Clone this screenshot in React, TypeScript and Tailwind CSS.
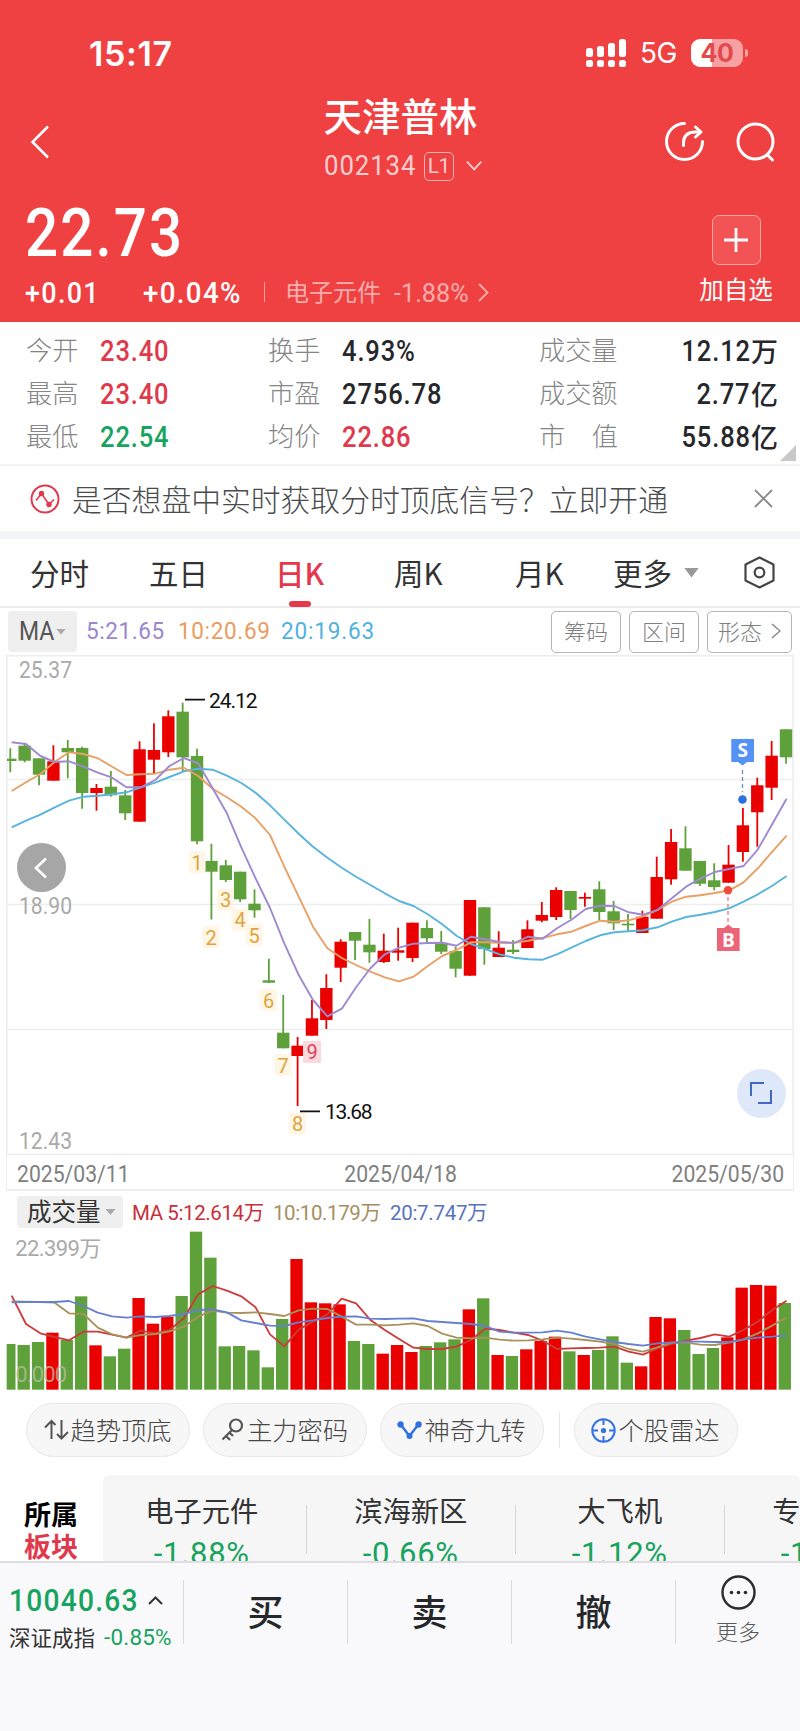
import type { ReactNode } from "react";

type Candle = [high: number, top: number, bottom: number, low: number, up: 0 | 1];

const RED = "#eb0000";
const GREEN = "#5ea03a";
const STEP = 14.365;

const candles: Candle[] = [
  [748.3, 758.7, 761, 772.3, 0],
  [743.3, 745.7, 760.7, 762.3, 0],
  [758.3, 758.3, 774.7, 785.3, 0],
  [745.3, 761.3, 780.7, 780.7, 1],
  [740, 748, 752.3, 778.3, 0],
  [746.7, 748, 793, 808.7, 0],
  [784, 788, 793, 810.7, 1],
  [771, 786.7, 795.3, 796.7, 0],
  [790, 795.3, 813.3, 820, 0],
  [741.3, 749.3, 821.7, 821.7, 1],
  [723.3, 750, 759.7, 773.3, 1],
  [710.3, 716.3, 752.3, 757, 1],
  [702.7, 711.7, 757.3, 771.7, 0],
  [748.7, 756, 841.3, 844.3, 0],
  [843.7, 861, 871.7, 919.5, 0],
  [860, 865.3, 880, 882, 0],
  [871.7, 871.7, 899.3, 902, 0],
  [889.3, 903.7, 910.3, 917.7, 0],
  [958.7, 980.3, 982.7, 983, 0],
  [995, 1032.7, 1048.3, 1048.3, 0],
  [1037, 1045.7, 1056, 1106, 1],
  [1000, 1018.3, 1035.7, 1035.7, 1],
  [974.3, 988, 1020, 1029, 1],
  [939.3, 941.7, 967.7, 982, 1],
  [932, 932, 940.7, 960, 0],
  [919, 944.7, 952.3, 962.7, 0],
  [933.7, 950.7, 962, 963, 1],
  [927.7, 950.3, 952.7, 960.7, 1],
  [922.7, 922.7, 958, 962, 1],
  [920.3, 928, 938.3, 942.7, 0],
  [931, 942.7, 951.7, 954, 0],
  [946.7, 951, 968.7, 977.3, 0],
  [900, 900, 975.7, 975.7, 1],
  [907.3, 907.3, 949, 964.7, 0],
  [931.3, 947.7, 957, 957, 1],
  [940, 949.7, 952, 954, 0],
  [920.3, 929.3, 948, 948, 1],
  [902, 915, 920.7, 922.3, 1],
  [887.3, 890, 917, 920, 1],
  [891, 891, 910, 919, 0],
  [892.7, 897, 898.7, 906.7, 1],
  [881.3, 889.3, 912, 920, 0],
  [901, 911.3, 923.3, 930, 0],
  [914, 923.7, 925.3, 931, 0],
  [910.7, 916.7, 933, 933, 1],
  [856.7, 877, 918.7, 918.7, 1],
  [829, 842, 879.3, 884.7, 1],
  [826.3, 848.3, 870.7, 870.7, 0],
  [861, 861, 883.7, 886, 0],
  [863.3, 880.3, 887, 890.3, 0],
  [845, 864.7, 882.7, 882.7, 1],
  [808, 825.3, 852, 861.7, 1],
  [777.7, 785.3, 812.3, 846.7, 1],
  [741, 755.7, 787.7, 800, 1],
  [729.3, 729.3, 757.3, 763.7, 0],
];

const ma5 = [
  742.3, 744, 756, 762, 761.3, 766.7, 772.7, 777.7, 787.3, 787.3, 780, 766, 758, 763.3, 788.3, 813.3, 847.3, 878.3, 908,
  943.3, 975, 1000, 1016.3, 1008.7, 987.3, 968.3, 954.3, 947.7, 943.7, 943, 942.7, 945.7, 936.7, 939.3, 942, 943, 936.7,
  938.7, 928.3, 919.7, 909, 905.7, 906, 912.3, 914.7, 910, 898.3, 886.7, 878.7, 872, 869, 866, 849.3, 824, 798.7,
];
const ma10 = [
  791, 782.3, 774, 761.7, 752.3, 754, 758.3, 766.7, 775, 774.3, 773.7, 769.7, 767.7, 776, 788.7, 797.3, 806.7, 818.3,
  835, 866.7, 896.7, 926.7, 948.3, 958, 965, 971.7, 977.3, 981.3, 976.7, 966, 956, 950, 942.3, 942.3, 942.7, 942.7,
  940.7, 938, 934.3, 931.7, 926, 920.7, 921.7, 920.3, 916.3, 910, 901.7, 896.7, 895.3, 893, 890.3, 882.3, 868.3, 851.7,
  835.7,
];
const ma20 = [
  827.3, 820.7, 814.7, 807.3, 800.7, 796.7, 795.7, 794.3, 792.3, 787.3, 782.7, 777, 771.3, 768.7, 769.7, 775.7, 783,
  792.7, 805.3, 819.7, 833.7, 846.7, 857.7, 867.7, 876.7, 885, 893.3, 901, 906, 914.3, 924.3, 935.7, 944, 949, 954.3,
  957.7, 959.3, 959.7, 954.3, 947.7, 941, 935.3, 932.3, 931.3, 930.3, 927.3, 921.7, 917, 914.7, 912, 908.3, 901.7, 894.3,
  885.7, 876,
];

// Tops of the volume bars, in thirds of a pixel.
const volumes = [
  492, 495, 486, 458, 480, 349, 496, 529, 506, 354, 431, 411, 348, 155, 233, 499, 498, 511, 562, 417, 237, 367, 370, 373,
  483, 492, 521, 495, 516, 498, 487, 478, 388, 355, 525, 528, 508, 483, 470, 514, 525, 510, 469, 548, 559, 411, 415, 450,
  522, 504, 472, 323, 315, 317, 369,
];
const vol5 = [
  347, 432, 460, 471, 481, 455, 455, 464, 473, 452, 460, 450, 415, 343, 318, 332, 349, 382, 463, 499, 449, 425, 403, 356,
  370, 420, 450, 477, 503, 507, 507, 500, 480, 446, 450, 458, 465, 482, 507, 505, 504, 503, 500, 515, 524, 505, 492, 482,
  474, 463, 470, 450, 425, 390, 362,
];
const vol10 = [
  364, 365, 366, 368, 400, 402, 443, 463, 473, 465, 462, 454, 440, 410, 392, 398, 399, 397, 402, 408, 391, 386, 387, 410,
  434, 434, 436, 434, 430, 438, 461, 473, 475, 473, 479, 482, 481, 478, 473, 476, 480, 485, 492, 507, 515, 502, 488, 488,
  494, 495, 488, 478, 460, 437, 413,
];
const vol20 = [
  367, 366, 366, 366, 363, 378, 398, 409, 413, 409, 411, 408, 402, 390, 388, 397, 421, 429, 437, 438, 427, 421, 414, 410,
  409, 416, 417, 416, 415, 423, 426, 429, 432, 438, 455, 458, 458, 457, 452, 458, 470, 478, 486, 492, 497, 490, 487, 485,
  485, 486, 486, 479, 473, 470, 466,
];

const turns: [label: string, x: number, y: number][] = [
  ["1", 197, 862],
  ["2", 211, 937],
  ["3", 225.5, 899.5],
  ["4", 240, 919.5],
  ["5", 254, 935],
  ["6", 268.5, 1000],
  ["7", 283, 1065],
  ["8", 297.5, 1123.5],
];

function linePoints(values: number[], start: number, step: number) {
  return values.map((y, i) => `${(start + i * step).toFixed(1)},${y}`).join(" ");
}

function StatusBar() {
  return (
    <div className="flex h-[84px] items-end pl-[89px] pr-[52px]">
      <span className="mb-[14px] font-['Inter'] text-[34px] font-semibold leading-[32px] tracking-[0.6px]">15:17</span>
      <div className="mb-[17px] ml-auto flex h-7 items-center">
        <svg width="41" height="28" viewBox="0 0 41 28" fill="#fff">
          {[9, 7, 4, 0].map((y, i) => (
            <g key={y}>
              <rect x={i * 11} y={y} width="7" height={18 - y} rx="2.5" />
              <rect x={i * 11} y="21" width="7" height="7" rx="2.5" />
            </g>
          ))}
        </svg>
        <span className="ml-[13px] w-[38px] font-['Inter'] text-[28px] leading-7 tracking-[-0.5px]">5G</span>
        <div className="ml-[13px] flex h-7 w-[52px] items-center justify-center rounded-[9px] bg-[linear-gradient(90deg,#fff_41%,#f7a1a3_41%)] font-['Inter'] text-[25px] font-bold leading-none tracking-[-0.3px] text-[#e34a4e]">
          40
        </div>
        <div className="ml-[2px] h-2 w-[3px] rounded-r-full bg-[#f7a1a3]" />
      </div>
    </div>
  );
}

function Header() {
  return (
    <header className="h-[322px] bg-[#f04142] text-white">
      <StatusBar />
      <div className="flex h-[105px] items-start pl-[30px] pr-[24px]">
        <div className="w-[145px] pt-[41px]">
          <svg width="20" height="34" viewBox="0 0 20 34" fill="none" stroke="#fff" strokeWidth="2.6">
            <path d="M18 1.5 2.5 17 18 32.5" />
          </svg>
        </div>
        <div className="flex flex-1 flex-col items-center">
          <h1 className="mr-[5px] mt-[7px] text-[38.5px] font-medium leading-[46px]">天津普林</h1>
          <div className="mt-[14px] flex h-[30px] w-[158px] items-center text-[#fbcfcf]">
            <span className="w-[100px] origin-left scale-x-[0.92] font-['Roboto'] text-[28px] leading-none tracking-[1px]">
              002134
            </span>
            <span className="flex h-[29px] w-[31px] items-center justify-center rounded-[5px] border-[1.5px] border-[#f8b3b3] font-['Roboto'] text-[21px] leading-none tracking-[-0.5px]">
              L1
            </span>
            <svg className="ml-[12px]" width="17" height="12" viewBox="0 0 17 12" fill="none" stroke="#fbcfcf" strokeWidth="2">
              <path d="m1 1.5 7.5 8L16 1.5" />
            </svg>
          </div>
        </div>
        <div className="flex w-[145px] justify-end gap-[31px] pt-[38px]">
          <svg width="40" height="40" viewBox="0 0 40 40" fill="none" stroke="#fff" strokeWidth="3" strokeLinecap="round">
            <path d="M19.5 1.5a18 18 0 1 0 18 18" />
            <path d="M18.5 23.5V21c0-7 4-11 12-11h4" />
            <path d="m30.5 5 5.5 5-5.5 5" strokeLinejoin="round" />
          </svg>
          <svg width="40" height="40" viewBox="0 0 40 40" fill="none" stroke="#fff" strokeWidth="3" strokeLinecap="round">
            <circle cx="19.5" cy="19.5" r="17.5" />
            <path d="m31.5 33 5 5" />
          </svg>
        </div>
      </div>
      <div className="flex h-[133px] justify-between pl-[25px] pr-[27px]">
        <div>
          <div className="mt-[9px] w-[200px] origin-left scale-x-[0.87] font-['Roboto'] text-[67px] font-medium leading-[70px] tracking-[2.4px]">
            22.73
          </div>
          <div className="mt-[9px] flex h-8 items-center font-['Roboto'] text-[29px] font-medium leading-none tracking-[1.4px]">
            <span className="w-[118px] origin-left scale-x-[0.93]">+0.01</span>
            <span className="w-[121px] origin-left scale-x-[0.955]">+0.04%</span>
            <span className="mb-[2px] h-[20px] w-px bg-[#f8a0a0]" />
            <span className="ml-[20px] flex items-center text-[24px] font-normal text-[#f9adad]">
              <span className="-mt-[4px] w-[109px] font-['Noto_Sans_CJK_SC'] tracking-normal">电子元件</span>
              <span className="w-[76px] origin-left scale-x-[0.97] text-[26px] tracking-normal">-1.88%</span>
              <svg className="mb-[2px] ml-[8px]" width="11" height="19" viewBox="0 0 11 19" fill="none" stroke="#f9adad" strokeWidth="1.8">
                <path d="m1 1 8.5 8.5L1 18" />
              </svg>
            </span>
          </div>
        </div>
        <div className="flex w-[74px] flex-col items-center pt-[26px]">
          <div className="flex h-[50px] w-[49px] items-center justify-center rounded-[7px] border-[1.5px] border-[#f8a3a3] bg-[#f25455]">
            <svg width="26" height="26" viewBox="0 0 26 26" stroke="#fff" strokeWidth="2.8">
              <path d="M13 1v24M1 13h24" />
            </svg>
          </div>
          <span className="mt-[9px] whitespace-nowrap text-[24.5px] leading-[30px]">加自选</span>
        </div>
      </div>
    </header>
  );
}

type StatProps = { label: ReactNode; value: string; unit?: string; className?: string; right?: boolean };

function Stat({ label, value, unit, className = "text-[#26272b]", right }: StatProps) {
  return (
    <div className={`flex h-[43px] items-center ${right ? "justify-between" : ""}`}>
      <span className="-mt-[5px] flex w-[79px] shrink-0 justify-between whitespace-nowrap text-[26.2px] font-light leading-none text-[#858585]">
        {label}
      </span>
      <span
        className={`flex items-center font-['Roboto'] text-[29px] font-medium leading-none tracking-[1px] ${
          right ? "" : "-ml-[5px]"
        } ${className}`}
      >
        <span className={`scale-x-[0.88] ${right ? "origin-right" : "origin-left"}`}>{value}</span>
        {unit && <span className="-mt-[3px] font-['Noto_Sans_CJK_SC'] text-[27px] tracking-normal">{unit}</span>}
      </span>
    </div>
  );
}

function Stats() {
  const red = "text-[#e0394c]";
  return (
    <section className="relative flex h-[144px] border-b-2 border-[#f2f3f5] pl-[26px] pr-[22px] pt-[8px]">
      <div className="w-[242px]">
        <Stat label="今开" value="23.40" className={red} />
        <Stat label="最高" value="23.40" className={red} />
        <Stat label="最低" value="22.54" className="text-[#17a360]" />
      </div>
      <div className="w-[271px]">
        <Stat label="换手" value="4.93%" />
        <Stat label="市盈" value="2756.78" />
        <Stat label="均价" value="22.86" className={red} />
      </div>
      <div className="flex-1">
        <Stat right label="成交量" value="12.12" unit="万" />
        <Stat right label="成交额" value="2.77" unit="亿" />
        <Stat
          right
          label={
            <>
              <span>市</span>
              <span>值</span>
            </>
          }
          value="55.88"
          unit="亿"
        />
      </div>
      <div className="absolute bottom-[3px] right-[4px] h-4 w-4 bg-[#c9c9c9] [clip-path:polygon(100%_0,100%_100%,0_100%)]" />
    </section>
  );
}

function Notice() {
  return (
    <section className="flex h-[65px] items-center pl-[30px] pr-[27px]">
      <svg width="30" height="30" viewBox="0 0 30 30" fill="none" stroke="#e0394c" strokeWidth="2">
        <circle cx="15" cy="15" r="13.5" />
        <path d="m6 16.5 5.5-7 7.5 11 5-5" strokeWidth="1.6" />
        <circle cx="11.5" cy="9.5" r="2.7" fill="#e0394c" stroke="none" />
        <circle cx="19" cy="20.5" r="2.7" fill="#e0394c" stroke="none" />
      </svg>
      <p className="ml-[12px] whitespace-nowrap text-[29.8px] font-light leading-none text-[#4a4b4e]">
        是否想盘中实时获取分时顶底信号？立即开通
      </p>
      <svg className="ml-auto" width="19" height="19" viewBox="0 0 19 19" stroke="#8a8a8a" strokeWidth="1.8">
        <path d="m1 1 17 17M18 1 1 18" />
      </svg>
    </section>
  );
}

function Tabs() {
  return (
    <nav className="flex h-[69px] items-center border-b-2 border-[#ececec] pl-[30px] pr-[25px] text-[29.5px] leading-none text-[#333]">
      <span className="w-[119px]">分时</span>
      <span className="w-[126px]">五日</span>
      <span className="relative w-[119px] font-medium text-[#e5384c]">
        日K
        <span className="absolute -bottom-[20px] left-[14px] h-[6px] w-[22px] rounded-full bg-[#e5384c]" />
      </span>
      <span className="w-[121px]">周K</span>
      <span className="w-[98px]">月K</span>
      <span>更多</span>
      <span className="ml-[12px] h-[10px] w-[15px] bg-[#999] [clip-path:polygon(0_0,100%_0,50%_100%)]" />
      <svg className="ml-auto" width="31" height="33" viewBox="0 0 31 33" fill="none" stroke="#444" strokeWidth="2.2">
        <path d="m15.5 1.5 14 7v16l-14 7-14-7v-16z" strokeLinejoin="round" />
        <circle cx="15.5" cy="16.5" r="4.8" />
      </svg>
    </nav>
  );
}

function OutlineButton({ className, children }: { className: string; children: ReactNode }) {
  return (
    <button
      className={`flex h-[42px] items-center justify-center rounded-[5px] border-[1.5px] border-[#b5b5b5] pb-[4px] text-[22px] font-light leading-none text-[#808080] ${className}`}
    >
      {children}
    </button>
  );
}

function MaRow() {
  return (
    <div className="flex h-[47px] items-center px-[8px] font-['Roboto'] text-[24.5px] leading-none">
      <div className="flex h-[41px] w-[69px] items-center rounded-[4px] bg-[#efefef] pl-[11px] text-[25px] text-[#555]">
        <span className="w-[34px] origin-left scale-x-[0.92]">MA</span>
        <span className="ml-[3px] h-[6px] w-[10px] bg-[#aaa] [clip-path:polygon(0_0,100%_0,50%_100%)]" />
      </div>
      <span className="ml-[9px] w-[92px] origin-left scale-x-[0.92] tracking-[0.6px] text-[#9c86cf]">5:21.65</span>
      <span className="w-[103px] origin-left scale-x-[0.92] tracking-[0.7px] text-[#ed9c5e]">10:20.69</span>
      <span className="origin-left scale-x-[0.92] tracking-[0.9px] text-[#50b2de]">20:19.63</span>
      <div className="ml-auto flex gap-[8px] font-['Noto_Sans_CJK_SC']">
        <OutlineButton className="w-[70px]">筹码</OutlineButton>
        <OutlineButton className="w-[70px]">区间</OutlineButton>
        <OutlineButton className="w-[85px] gap-[9px]">
          形态
          <svg className="mt-[2px]" width="10" height="16" viewBox="0 0 10 16" fill="none" stroke="#8a8a8a" strokeWidth="1.5">
            <path d="m1 1 8 7-8 7" />
          </svg>
        </OutlineButton>
      </div>
    </div>
  );
}

function PriceChart() {
  return (
    <div className="relative h-[500px]">
      <svg width="800" height="500" viewBox="0 655 800 500" fontFamily="Roboto">
        <g stroke="#ededf0" strokeWidth="1.5">
          <path d="M6.5 655.7H793M6.5 779.5H793M6.5 904.5H793M6.5 1029.5H793M6.5 1154.3H793" />
          <path d="M6.8 655v500M793 655v500" />
        </g>
        <g fontSize="23.5" fill="#aaa">
          <text x="19" y="678" textLength="53" lengthAdjust="spacingAndGlyphs">25.37</text>
          <text x="19" y="913.5" textLength="53" lengthAdjust="spacingAndGlyphs">18.90</text>
          <text x="19" y="1149" textLength="53" lengthAdjust="spacingAndGlyphs">12.43</text>
        </g>
        {candles.map(([high, top, bottom, low, up], i) => {
          const x = 10.3 + i * STEP;
          const left = Math.max(x - 6.2, 7);
          const color = up ? RED : GREEN;
          return (
            <g key={i} fill={color}>
              <rect x={x - 0.9} y={high} width="1.8" height={low - high} />
              <rect x={left} y={top} width={x + 6.2 - left} height={bottom - top} />
            </g>
          );
        })}
        <g fill="none" strokeWidth="1.9" strokeLinejoin="round">
          <polyline points={linePoints(ma20, 11.7, 14.35)} stroke="#58b4dc" />
          <polyline points={linePoints(ma10, 11.7, 14.35)} stroke="#e8a066" />
          <polyline points={linePoints(ma5, 11.7, 14.35)} stroke="#9f89d0" />
        </g>
        <g fontSize="20" textAnchor="middle" fill="#e0a340">
          {turns.map(([label, x, y]) => (
            <g key={label}>
              <rect x={x - 8.5} y={y - 11} width="17" height="22" rx="3" fill="#fff6e6" />
              <text x={x} y={y + 7.5}>{label}</text>
            </g>
          ))}
          <rect x="303" y="1041" width="18" height="22" fill="#fcd9dd" />
          <text x="312" y="1059" fill="#d8455c">9</text>
        </g>
        <path d="M185 699.7h20M300 1111.3h20" stroke="#111" strokeWidth="1.8" />
        <g fontSize="21" fill="#111">
          <text x="209" y="707.5" textLength="48.5">24.12</text>
          <text x="325" y="1119" textLength="47.5">13.68</text>
        </g>
        <g>
          <path d="M742.5 770v22" stroke="#6a8fc0" strokeWidth="1.3" strokeDasharray="4 3" />
          <circle cx="742.5" cy="799.5" r="4.3" fill="#2e6fe0" />
          <path d="M731.3 739H754v23h-7l-4.5 3.5-4.5-3.5h-6.7z" fill="#5592f5" />
          <path d="M728 897v28" stroke="#e07a84" strokeWidth="1.3" strokeDasharray="4 3" />
          <circle cx="728" cy="890.3" r="4.2" fill="#f04a3c" />
          <path d="M717 928h7l4.3-3.5 4.3 3.5h7v23H717z" fill="#ec6577" />
          <g fill="#fff" fontFamily="Open Sans" fontWeight="700" fontSize="19" textAnchor="middle">
            <text x="742.7" y="757.3">S</text>
            <text x="728.5" y="946.5">B</text>
          </g>
        </g>
      </svg>
      <button className="absolute left-[16.5px] top-[188px] flex h-[49px] w-[49px] items-center justify-center rounded-full bg-[#a6a6a6]">
        <svg width="14" height="22" viewBox="0 0 14 22" fill="none" stroke="#fff" strokeWidth="2.6">
          <path d="M12 1.5 2 11l10 9.5" />
        </svg>
      </button>
      <button className="absolute left-[736.5px] top-[413.5px] flex h-[49px] w-[49px] items-center justify-center rounded-full bg-[#dfe8f9]">
        <svg width="22" height="22" viewBox="0 0 22 22" fill="none" stroke="#3f69c4" strokeWidth="2">
          <path d="M14 1H1v13M21 8v13H8" />
        </svg>
      </button>
    </div>
  );
}

function VolumeChart() {
  return (
    <div>
      <div className="flex h-[39px] items-start pl-[17px] pt-[5px] font-['Roboto'] text-[20.5px] leading-none">
        <div className="flex h-[32px] w-[106px] items-center rounded-[4px] bg-[#efefef] pb-[2px] pl-[10px] font-['Noto_Sans_CJK_SC'] text-[24.5px] text-[#333]">
          成交量
          <span className="ml-[5px] mt-[2px] h-[6px] w-[10px] bg-[#aaa] [clip-path:polygon(0_0,100%_0,50%_100%)]" />
        </div>
        <div className="flex h-[35px] items-center pl-[9px] font-['Roboto','Noto_Sans_CJK_SC']">
          <span className="w-[141px] tracking-[-0.4px] text-[#c7303a]">MA 5:12.614万</span>
          <span className="w-[117px] tracking-[-0.4px] text-[#a68e5e]">10:10.179万</span>
          <span className="tracking-[-0.3px] text-[#5873bd]">20:7.747万</span>
        </div>
      </div>
      <svg className="block" width="800" height="160" viewBox="0 150 2400 480">
        {volumes.map((top, i) => {
          const x = 28 + i * 43.08;
          const left = Math.max(x - 18.5, 20);
          return (
            <rect key={i} x={left} y={top} width={x + 18.5 - left} height={629 - top} fill={candles[i][4] ? RED : GREEN} />
          );
        })}
        <g fontSize="66" fill="#aaa" fontFamily="Roboto, 'Noto Sans CJK SC'">
          <text x="46" y="227" textLength="258">22.399万</text>
          <text x="46" y="605" textLength="155" fill="#b9bfa8" fillOpacity="0.75">0.000</text>
        </g>
        <g fill="none" strokeWidth="5.5" strokeLinejoin="round">
          <polyline points={linePoints(vol5, 35, 43.05)} stroke="#cc3a3a" />
          <polyline points={linePoints(vol10, 35, 43.05)} stroke="#a8925c" />
          <polyline points={linePoints(vol20, 35, 43.05)} stroke="#6580cf" />
        </g>
      </svg>
    </div>
  );
}

function Chip({ icon, children }: { icon: ReactNode; children: ReactNode }) {
  return (
    <button className="flex h-[54px] w-[164px] items-center justify-center rounded-full border-[1.5px] border-[#e8e8e8] bg-[#f7f7f7] text-[25.3px] font-light leading-none text-[#484848]">
      {icon}
      <span className="whitespace-nowrap">{children}</span>
    </button>
  );
}

function Chips() {
  return (
    <section className="flex h-[85px] items-start pl-[25.5px] pt-[13px]">
      <Chip
        icon={
          <svg width="27" height="24" viewBox="0 0 27 24" fill="none" stroke="#555" strokeWidth="2">
            <path d="M8.5 21V3M2 9.5 8.5 3l4 4M18.5 2v18.5M14 16l4.5 4.5L25 14" />
          </svg>
        }
      >
        趋势顶底
      </Chip>
      <div className="w-[13px]" />
      <Chip
        icon={
          <svg className="mr-[3px]" width="23" height="24" viewBox="0 0 23 24" fill="none" stroke="#555" strokeWidth="2.2">
            <circle cx="15" cy="7.5" r="6" />
            <path d="m11 12-9.5 9.5M5 18l4 4M8.5 14.5 12 18" />
          </svg>
        }
      >
        主力密码
      </Chip>
      <div className="w-[13px]" />
      <Chip
        icon={
          <svg className="mr-[2px]" width="25" height="20" viewBox="0 0 25 20" fill="#2f6fe4" stroke="#2f6fe4" strokeWidth="2.4">
            <path d="m4 5 8.5 11L21 5" fill="none" />
            <circle cx="3.5" cy="4.5" r="2" />
            <circle cx="12.5" cy="16" r="1.8" />
            <circle cx="21.5" cy="4.5" r="2" />
          </svg>
        }
      >
        神奇九转
      </Chip>
      <div className="ml-[15px] mr-[14px] mt-[9px] h-[36px] w-px bg-[#e6e6e6]" />
      <Chip
        icon={
          <svg className="mr-[2px]" width="25" height="25" viewBox="0 0 25 25" fill="none" stroke="#3472e6" strokeWidth="2">
            <circle cx="12.5" cy="12.5" r="11.2" />
            <path d="M12.5 1v6M12.5 18v6M1 12.5h6M18 12.5h6" />
            <circle cx="12.5" cy="12.5" r="1.6" fill="#3472e6" />
          </svg>
        }
      >
        个股雷达
      </Chip>
    </section>
  );
}

function Sector({ name, change }: { name: string; change: string }) {
  return (
    <div className="flex h-full w-[209px] shrink-0 items-start">
      <div className="flex-1 pt-[18px] text-center">
        <div className="text-[28.3px] leading-[34px] text-[#333]">{name}</div>
        <div className="mt-[12px] font-['Roboto'] text-[31px] leading-[30px] tracking-[0.7px] text-[#17a360]">{change}</div>
      </div>
      <div className="mt-[30px] h-[49px] w-[1.5px] bg-[#d6d6d6]" />
    </div>
  );
}

function Sectors() {
  return (
    <section className="flex h-[86px] overflow-hidden">
      <div className="w-[103px] pl-[24px] pt-[23px] text-[27px] font-bold leading-[32px] text-black">
        <div>所属</div>
        <div className="text-[#e0394c]">板块</div>
      </div>
      <div className="flex flex-1 overflow-hidden rounded-t-[6px] bg-[#f6f6f6]">
        <div className="-ml-[5px] flex">
          <Sector name="电子元件" change="-1.88%" />
          <Sector name="滨海新区" change="-0.66%" />
          <Sector name="大飞机" change="-1.12%" />
          <Sector name="专精特新" change="-1.05%" />
        </div>
      </div>
    </section>
  );
}

function TradeButton({ children }: { children: ReactNode }) {
  return (
    <button className="flex h-[64px] w-[164px] items-center justify-center border-l border-[#dcdce0] pb-[5px] text-[36px] font-medium leading-none text-[#26272b]">
      {children}
    </button>
  );
}

function BottomBar() {
  return (
    <footer className="flex h-[170px] items-start border-t-2 border-[#dedee2] bg-[#f9f9fb]">
      <div className="w-[183px] pl-[9px] pt-[22px]">
        <div className="flex h-[30px] items-center font-['Roboto'] text-[32px] font-medium leading-none tracking-[1.4px] text-[#17a360]">
          <span className="w-[139px] origin-left scale-x-[0.88]">10040.63</span>
          <svg width="15" height="9" viewBox="0 0 15 9" fill="none" stroke="#333" strokeWidth="2">
            <path d="m1 8 6.5-6.5L14 8" />
          </svg>
        </div>
        <div className="mt-[11px] flex h-[22px] items-center whitespace-nowrap text-[21.5px] leading-none text-[#333]">
          <span className="w-[95px]">深证成指</span>
          <span className="font-['Roboto'] text-[22.5px] tracking-[0.2px] text-[#17a360]">-0.85%</span>
        </div>
      </div>
      <div className="flex pt-[17px]">
        <TradeButton>买</TradeButton>
        <TradeButton>卖</TradeButton>
        <TradeButton>撤</TradeButton>
        <div className="h-[64px] w-px bg-[#dcdce0]" />
      </div>
      <div className="flex flex-1 flex-col items-center pt-[12px]">
        <svg width="35" height="35" viewBox="0 0 35 35" fill="none" stroke="#2b2b2e" strokeWidth="2.4">
          <circle cx="17.5" cy="17.5" r="16" />
          <g fill="#2b2b2e" stroke="none">
            <circle cx="10.5" cy="17.5" r="1.8" />
            <circle cx="17.5" cy="17.5" r="1.8" />
            <circle cx="24.5" cy="17.5" r="1.8" />
          </g>
        </svg>
        <span className="mt-[8px] text-[22px] font-light leading-[24px] text-[#5a5a5a]">更多</span>
      </div>
    </footer>
  );
}

export default function App() {
  return (
    <main className="h-[1731px] w-[800px] overflow-hidden bg-white font-['Noto_Sans_CJK_SC',sans-serif]">
      <Header />
      <Stats />
      <Notice />
      <div className="h-[8px] bg-[#f3f4f8]" />
      <Tabs />
      <MaRow />
      <PriceChart />
      <div className="mx-[6px] flex h-[36px] items-center justify-between border-x border-b-2 border-[#ededf0] pl-[10px] pr-[9px] pt-[5px] font-['Roboto'] text-[23.5px] leading-none text-[#808080]">
        <span className="origin-left scale-x-[0.9]">2025/03/11</span>
        <span className="scale-x-[0.9]">2025/04/18</span>
        <span className="origin-right scale-x-[0.9]">2025/05/30</span>
      </div>
      <VolumeChart />
      <Chips />
      <Sectors />
      <BottomBar />
    </main>
  );
}
